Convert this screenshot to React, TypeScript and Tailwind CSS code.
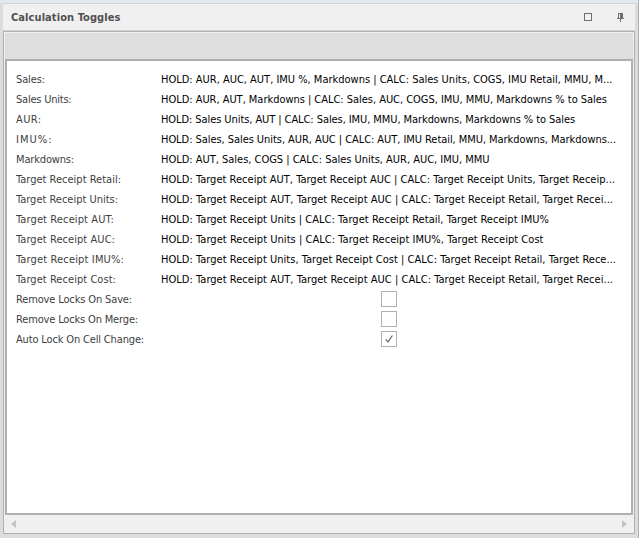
import { useLayoutEffect, useRef, useState } from "react";

type TextProps = { text: string; width: number; className?: string };

// Spreads a line's tracking so that it fills the given advance width.
function FitText({ text, width, className = "" }: TextProps) {
  const ref = useRef<HTMLSpanElement>(null);
  const [tracking, setTracking] = useState(0);
  useLayoutEffect(() => {
    if (ref.current) {
      ref.current.style.letterSpacing = "0px";
      const natural = ref.current.getBoundingClientRect().width;
      const next = (width - natural) / text.length;
      ref.current.style.letterSpacing = `${next}px`;
      setTracking(next);
    }
  }, [text, width]);
  return (
    <span ref={ref} className={`inline-block whitespace-pre pt-0.5 ${className}`} style={{ letterSpacing: `${tracking}px` }}>
      {text}
    </span>
  );
}

const rows: [string, number, string, number][] = [
  ["Sales:", 29, "HOLD: AUR, AUC, AUT, IMU %, Markdowns | CALC: Sales Units, COGS, IMU Retail, MMU, M...", 451.5],
  ["Sales Units:", 55.5, "HOLD: AUR, AUT, Markdowns | CALC: Sales, AUC, COGS, IMU, MMU, Markdowns % to Sales", 446],
  ["AUR:", 25.5, "HOLD: Sales Units, AUT | CALC: Sales, IMU, MMU, Markdowns, Markdowns % to Sales", 414],
  ["IMU%:", 36.5, "HOLD: Sales, Sales Units, AUR, AUC | CALC: AUT, IMU Retail, MMU, Markdowns, Markdowns...", 455],
  ["Markdowns:", 58, "HOLD: AUT, Sales, COGS | CALC: Sales Units, AUR, AUC, IMU, MMU", 328.5],
  ["Target Receipt Retail:", 105, "HOLD: Target Receipt AUT, Target Receipt AUC | CALC: Target Receipt Units, Target Receip...", 454],
  ["Target Receipt Units:", 102, "HOLD: Target Receipt AUT, Target Receipt AUC | CALC: Target Receipt Retail, Target Recei...", 452],
  ["Target Receipt AUT:", 98, "HOLD: Target Receipt Units | CALC: Target Receipt Retail, Target Receipt IMU%", 388],
  ["Target Receipt AUC:", 99, "HOLD: Target Receipt Units | CALC: Target Receipt IMU%, Target Receipt Cost", 382.5],
  ["Target Receipt IMU%:", 108, "HOLD: Target Receipt Units, Target Receipt Cost | CALC: Target Receipt Retail, Target Rece...", 455],
  ["Target Receipt Cost:", 100, "HOLD: Target Receipt AUT, Target Receipt AUC | CALC: Target Receipt Retail, Target Recei...", 452],
];

const options: [string, number, boolean][] = [
  ["Remove Locks On Save:", 116, false],
  ["Remove Locks On Merge:", 122, false],
  ["Auto Lock On Cell Change:", 128, true],
];

export default function App() {
  return (
    <div className="flex h-[538px] w-[639px] flex-col border-r border-[#b0b0b0] bg-[#dcdcdc] font-['DejaVu_Sans_Condensed','DejaVu_Sans',sans-serif] text-[11px] leading-4 [font-stretch:condensed]">
      <div className="h-[3px] shrink-0 bg-[#e4e8ef]" />
      <div className="mx-[3px] flex h-[28px] shrink-0 items-center border-y border-[#d2d2d2] bg-[#f0f0f0] pl-2 pr-[11px]">
        <FitText text="Calculation Toggles" width={109.5} className="font-bold text-[#505050]" />
        <div className="ml-auto flex items-center">
          <svg width="8" height="8" className="mr-[25px]" shapeRendering="crispEdges">
            <path d="M.5 .5h7v7h-7z" fill="none" stroke="#707070" />
          </svg>
          <svg width="7" height="9" shapeRendering="crispEdges">
            <path d="M1 0h5v5h1v1H4v3H3V6H0V5h1zM2 1v4h1V1z" fill="#707070" fillRule="evenodd" />
          </svg>
        </div>
      </div>
      <div className="mx-[3px] mb-[4px] flex min-h-0 flex-1 flex-col border border-[#b0b0b0] bg-[#f0f0f0] px-px pt-px">
        <div className="h-[26px] shrink-0 bg-[#dedede]" />
        <div className="min-h-0 flex-1 border-2 border-[#b0b0b0] bg-white pt-2 pl-[9px]">
          {rows.map(([label, labelWidth, value, valueWidth]) => (
            <div key={label} className="flex h-5 items-center">
              <div className="w-[145px] shrink-0 text-[#404040]">
                <FitText text={label} width={labelWidth} />
              </div>
              <FitText text={value} width={valueWidth} className="text-black" />
            </div>
          ))}
          {options.map(([label, width, checked]) => (
            <div key={label} className="flex h-5 items-center">
              <div className="w-[365px] shrink-0 text-[#404040]">
                <FitText text={label} width={width} />
              </div>
              <div className="flex size-4 items-center justify-center border border-[#b0b0b0] bg-white">
                {checked && (
                  <svg width="8" height="8">
                    <path d="M.7 4.4L3 6.9L7.4 .5" fill="none" stroke="#606060" strokeWidth="1.15" />
                  </svg>
                )}
              </div>
            </div>
          ))}
        </div>
        <div className="flex h-[18px] shrink-0 items-center justify-between px-[6px]">
          <svg width="5" height="8"><path d="M5 0v8L0 4z" fill="#c3c3c3" /></svg>
          <svg width="5" height="8"><path d="M0 0v8l5-4z" fill="#c3c3c3" /></svg>
        </div>
      </div>
    </div>
  );
}
